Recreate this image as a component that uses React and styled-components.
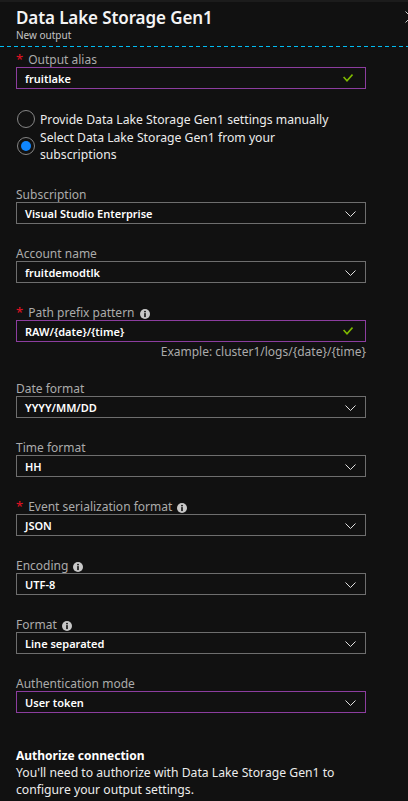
import React from 'react';
import styled, { createGlobalStyle } from 'styled-components';

const GlobalStyles = createGlobalStyle`
  html, body {
    margin: 0;
    padding: 0;
    background: #111111;
  }

  body {
    font-family: 'Segoe UI', 'Noto Sans', 'Open Sans', sans-serif;
  }
`;

const Blade = styled.div`
  position: relative;
  width: 408px;
  min-height: 801px;
  box-sizing: border-box;
  border-top: 2px solid #1c1c1c;
  background: #111111;
  overflow: hidden;
`;

const Header = styled.header`
  padding: 5px 16px 0;
`;

const Title = styled.h1`
  margin: 0;
  font-size: 17px;
  line-height: 22px;
  font-weight: 600;
  letter-spacing: -0.1px;
  color: #f4f4f4;
`;

const Subtitle = styled.p`
  margin: 0;
  font-size: 10px;
  line-height: 12px;
  color: #c4c4c4;
`;

const CloseButton = styled.button`
  position: absolute;
  top: 9px;
  right: -9px;
  width: 12px;
  height: 12px;
  padding: 0;
  border: 0;
  background: none;
  color: #cfcfcf;

  svg {
    display: block;
  }
`;

const Divider = styled.hr`
  margin: 5px 0 0;
  border: 0;
  height: 1px;
  background: linear-gradient(to right, #00bcf2 4px, transparent 4px) 0 0 / 7px 1px repeat-x;
`;

const Form = styled.form`
  display: flex;
  flex-direction: column;
  gap: 21px;
  width: 350px;
  padding: 4px 16px 0;
`;

const FieldGroup = styled.div`
  display: flex;
  flex-direction: column;
`;

const Label = styled.label`
  display: block;
  height: 16px;
  font-size: 12px;
  line-height: 17px;
  color: #ababab;
  white-space: nowrap;
`;

const Required = styled.span`
  color: #e81123;
  font-size: 13px;
  line-height: 0;
  margin-right: 5px;
`;

const InfoIcon = styled.svg`
  display: inline-block;
  margin-left: 5px;
  vertical-align: -2px;
`;

const Box = styled.div`
  display: flex;
  flex: none;
  align-items: center;
  justify-content: space-between;
  box-sizing: border-box;
  height: 22px;
  padding: 0 9px 0 8px;
  border: 1px solid ${(p) => (p.$active ? '#8c3d9f' : '#6e6e6e')};
  color: #ffffff;
  font-size: 11px;
  font-weight: 600;
`;

const Chevron = styled.svg`
  flex: none;
  margin-top: 2px;
`;

const Check = styled.svg`
  flex: none;
  margin-right: 3px;
`;

const Hint = styled.p`
  margin: 3px 0 0;
  height: 14px;
  text-align: right;
  font-size: 12px;
  line-height: 14px;
  color: #ababab;
`;

const RadioGroup = styled.div`
  display: flex;
  flex-direction: column;
  gap: 1px;
  padding: 0 0 2px;
`;

const RadioRow = styled.label`
  display: flex;
  align-items: center;
  gap: 5px;
`;

const RadioCircle = styled.span`
  flex: none;
  display: flex;
  align-items: center;
  justify-content: center;
  box-sizing: border-box;
  width: 18px;
  height: 18px;
  margin-left: 1px;
  border: 1px solid #858585;
  border-radius: 50%;

  &::after {
    content: '';
    width: 10px;
    height: 10px;
    border-radius: 50%;
    background: ${(p) => (p.$checked ? '#0f86ff' : 'transparent')};
  }
`;

const RadioText = styled.span`
  max-width: 300px;
  font-size: 12.2px;
  line-height: 17px;
  color: #ececec;
`;

const Section = styled.section`
  margin-top: 13px;
`;

const SectionTitle = styled.h2`
  margin: 0;
  font-size: 12px;
  line-height: 17px;
  font-weight: 700;
  color: #ffffff;
`;

const SectionText = styled.p`
  margin: 0;
  font-size: 12.2px;
  line-height: 17px;
  color: #ececec;
`;

const Info = () => (
  <InfoIcon width='10' height='10' viewBox='0 0 10 10'>
    <circle cx='5' cy='5' r='5' fill='#c8c8c8' />
    <circle cx='5' cy='2.6' r='0.95' fill='#111' />
    <rect x='4.2' y='4.1' width='1.6' height='4' fill='#111' />
  </InfoIcon>
);

const Field = ({ label, required, info, value, active, valid, hint }) => (
  <FieldGroup>
    <Label>
      {required && <Required>*</Required>}
      {label}
      {info && <Info />}
    </Label>
    <Box $active={active}>
      <span>{value}</span>
      {valid ? (
        <Check width='10' height='8' viewBox='0 0 10 8'>
          <polyline points='0.6,3 4,6.8 9.5,0.6' fill='none' stroke='#7fba00' strokeWidth='1.6' />
        </Check>
      ) : (
        <Chevron width='11' height='6' viewBox='0 0 11 6'>
          <polyline points='0.5,0.5 5.5,5.5 10.5,0.5' fill='none' stroke='#e0e0e0' strokeWidth='1' />
        </Chevron>
      )}
    </Box>
    {hint && <Hint>{hint}</Hint>}
  </FieldGroup>
);

const selects = [
  { label: 'Date format', value: 'YYYY/MM/DD' },
  { label: 'Time format', value: 'HH' },
  { label: 'Event serialization format', value: 'JSON', required: true, info: true },
  { label: 'Encoding', value: 'UTF-8', info: true },
  { label: 'Format', value: 'Line separated', info: true },
  { label: 'Authentication mode', value: 'User token', active: true },
];

const App = () => (
  <>
    <GlobalStyles />
    <Blade>
      <Header>
        <Title>Data Lake Storage Gen1</Title>
        <Subtitle>New output</Subtitle>
      </Header>
      <CloseButton aria-label='Close'>
        <svg width='12' height='12' viewBox='0 0 12 12'>
          <path d='M0.5 0.5 L11.5 11.5 M0.5 11.5 L11.5 0.5' stroke='currentColor' strokeWidth='1' />
        </svg>
      </CloseButton>
      <Divider />
      <Form>
        <Field label='Output alias' required value='fruitlake' active valid />
        <RadioGroup>
          <RadioRow>
            <RadioCircle />
            <RadioText>Provide Data Lake Storage Gen1 settings manually</RadioText>
          </RadioRow>
          <RadioRow>
            <RadioCircle $checked />
            <RadioText>Select Data Lake Storage Gen1 from your subscriptions</RadioText>
          </RadioRow>
        </RadioGroup>
        <Field label='Subscription' value='Visual Studio Enterprise' />
        <Field label='Account name' value='fruitdemodtlk' />
        <Field
          label='Path prefix pattern'
          required
          info
          value='RAW/{date}/{time}'
          active
          valid
          hint='Example: cluster1/logs/{date}/{time}'
        />
        {selects.map((f) => (
          <Field key={f.label} {...f} />
        ))}
        <Section>
          <SectionTitle>Authorize connection</SectionTitle>
          <SectionText>
            You'll need to authorize with Data Lake Storage Gen1 to configure your output settings.
          </SectionText>
        </Section>
      </Form>
    </Blade>
  </>
);

export default App;
